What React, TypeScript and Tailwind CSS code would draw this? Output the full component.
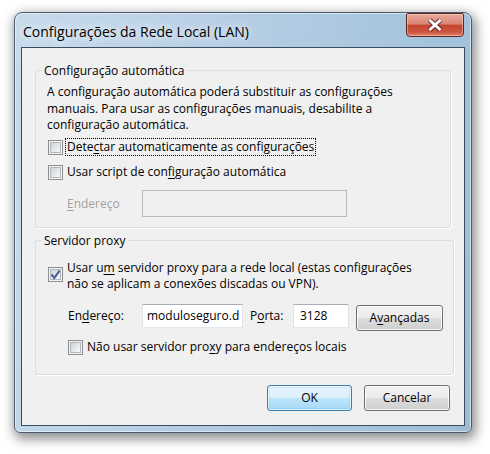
import React from "react";

// Win7 style checkbox (15px at this DPI)
const Box = ({ checked = false, className = "" }: { checked?: boolean; className?: string }) => (
  <span className={`relative flex h-[15px] w-[15px] shrink-0 border border-[#8e8f8f] bg-[#f4f4f4] p-[1px] ${className}`}>
    <span className="flex-1 border border-[#b3b7bc] bg-[linear-gradient(135deg,#cdd1d6_0%,#e6e8ea_55%,#f7f7f7_100%)]" />
    {checked && (
      <svg className="absolute left-[-1px] top-[-1px]" width="15" height="15" viewBox="0 0 15 15">
        <path d="M3.6 7.4 L6.2 11 L11.6 3.6" fill="none" stroke="#4a5f99" strokeWidth="2.1" />
      </svg>
    )}
  </span>
);

const Key = ({ children }: { children: React.ReactNode }) => (
  <span className="underline decoration-1 underline-offset-[2px]">{children}</span>
);

const Button = ({ children, primary = false, className = "" }: { children: React.ReactNode; primary?: boolean; className?: string }) => (
  <div
    className={`flex h-[26px] items-center justify-center rounded-[3px] border ${
      primary
        ? "border-[#3c7fb1] bg-[linear-gradient(180deg,#eaf6fd_0%,#d9f0fc_50%,#bee6fd_51%,#a7d9f5_100%)] shadow-[inset_0_0_0_1px_rgba(255,255,255,0.7),inset_0_0_2px_1px_rgba(90,180,230,0.5)]"
        : "border-[#707070] bg-[linear-gradient(180deg,#f2f2f2_0%,#ebebeb_50%,#dddddd_51%,#cfcfcf_100%)] shadow-[inset_0_0_0_1px_rgba(255,255,255,0.8)]"
    } ${className}`}
  >
    {children}
  </div>
);

export default function App() {
  return (
    <div className="h-[454px] w-[490px] overflow-hidden bg-white pl-[14px] pt-[12px] font-['Open_Sans',sans-serif] text-[12px] text-black">
      {/* window frame */}
      <div className="flex h-[421px] w-[458px] flex-col rounded-t-[8px] rounded-b-[6px] border border-[#4b5b6b] bg-[linear-gradient(100deg,#c8dbec_0%,#b9d0e6_35%,#a9c6de_70%,#9dbdd7_100%)] shadow-[inset_0_0_0_1px_rgba(255,255,255,0.5),2px_4px_12px_2px_rgba(0,0,0,0.45)]">
        {/* title bar */}
        <div className="flex h-[34px] shrink-0 items-start justify-between">
          <span className="ml-[8px] mt-[9px] text-[14px] leading-[20px] [text-shadow:0_0_8px_rgba(255,255,255,0.95),0_0_14px_rgba(255,255,255,0.8)]">
            Configurações da Rede Local (LAN)
          </span>
          <div className="mr-[7px] flex h-[24px] w-[58px] items-center justify-center rounded-b-[4px] rounded-t-[2px] border border-[#5a2a22] bg-[linear-gradient(180deg,#e9aa9c_0%,#da8574_45%,#c5462f_52%,#cc5640_82%,#e08470_100%)] shadow-[inset_0_0_0_1px_rgba(255,220,210,0.45)]">
            <svg width="16" height="14" viewBox="0 0 16 14">
              <path d="M2.5 2 L13.5 12 M13.5 2 L2.5 12" stroke="#3d1610" strokeWidth="5" strokeOpacity="0.75" />
              <path d="M2.5 2 L13.5 12 M13.5 2 L2.5 12" stroke="#ffffff" strokeWidth="3" />
            </svg>
          </div>
        </div>

        {/* client area */}
        <div className="mx-[6px] mb-[6px] flex flex-1 flex-col border border-[#3b4c5d] bg-[#f0f0f0] px-[13px] pt-[14px]">
          {/* group 1 */}
          <fieldset className="rounded-[3px] border border-[#d5dfe5] shadow-[1px_1px_0_#ffffff]">
            <legend className="ml-[6px] px-[2px] leading-[17px]">Configuração automática</legend>
            <div className="pb-[10px] pl-[11px] pr-[10px] pt-[5px]">
              <p className="leading-[16.5px]">
                A configuração automática poderá substituir as configurações
                <br />
                manuais. Para usar as configurações manuais, desabilite a
                <br />
                configuração automática.
              </p>
              <div className="mt-[4.5px] flex items-start">
                <Box className="ml-[1px] mt-[2px]" />
                <span className="ml-[2px] border border-dotted border-black px-[1px] leading-[16px]">
                  Dete<Key>c</Key>tar automaticamente as configurações
                </span>
              </div>
              <div className="mt-[7px] flex items-start">
                <Box className="ml-[1px] mt-[2px]" />
                <span className="ml-[2px] border border-transparent px-[1px] leading-[16px]">
                  Usar script de con<Key>f</Key>iguração automática
                </span>
              </div>
              <div className="mt-[9px] flex h-[27px] items-center">
                <span className="ml-[20px] w-[75px] text-[#a0a0a0]">
                  <Key>E</Key>ndereço
                </span>
                <div className="h-[27px] w-[205px] border border-[#b5b9bd] bg-[#f0f0f0]" />
              </div>
            </div>
          </fieldset>

          {/* group 2 */}
          <fieldset className="mt-[4px] rounded-[3px] border border-[#d5dfe5] shadow-[1px_1px_0_#ffffff]">
            <legend className="ml-[6px] px-[2px] leading-[17px]">Servidor proxy</legend>
            <div className="pb-[19px] pl-[11px] pr-[10px] pt-[11px]">
              <div className="flex items-start">
                <Box checked className="ml-[1px] mt-[7px]" />
                <span className="ml-[4px] leading-[16px]">
                  Usar u<Key>m</Key> servidor proxy para a rede local (estas configurações
                  <br />
                  não se aplicam a conexões discadas ou VPN).
                </span>
              </div>
              <div className="mt-[12px] flex items-start">
                <span className="ml-[21px] flex h-[24px] w-[74px] items-center">
                  En<Key>d</Key>ereço:
                </span>
                <div className="flex h-[24px] w-[101px] items-center overflow-hidden whitespace-nowrap border border-[#e2e3ea] border-t-[#abadb3] border-b-[#e3e9ef] bg-white pl-[4px]">
                  moduloseguro.d
                </div>
                <span className="ml-[7px] flex h-[24px] w-[43px] items-center">
                  P<Key>o</Key>rta:
                </span>
                <div className="flex h-[24px] w-[56px] items-center border border-[#e2e3ea] border-t-[#abadb3] border-b-[#e3e9ef] bg-white pl-[6px]">
                  3128
                </div>
                <Button className="ml-[7px] mt-[1px] w-[87px]">
                  <span>
                    A<Key>v</Key>ançadas
                  </span>
                </Button>
              </div>
              <div className="mt-[8px] flex items-start">
                <Box className="ml-[21px] mt-[1px]" />
                <span className="ml-[4px] leading-[16px]">
                  Não usar servidor pro<Key>x</Key>y para endereços locais
                </span>
              </div>
            </div>
          </fieldset>

          {/* dialog buttons */}
          <div className="mt-[10px] flex justify-end gap-[12px] pr-[1px]">
            <Button primary className="w-[85px]">
              OK
            </Button>
            <Button className="w-[86px]">Cancelar</Button>
          </div>
        </div>
      </div>
    </div>
  );
}
